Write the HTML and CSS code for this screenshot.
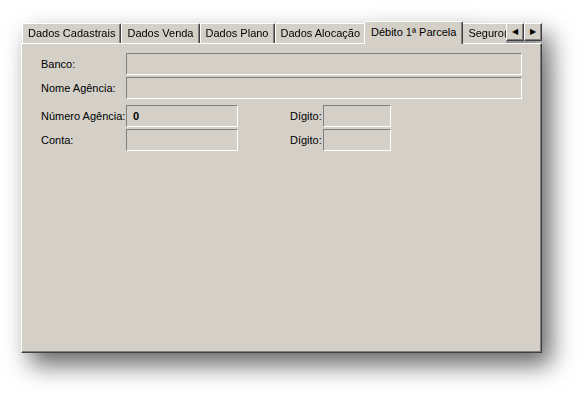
FILE: index.html
```html
<!DOCTYPE html>
<html lang="pt-BR">
<head>
    <meta charset="UTF-8">
    <title>Débito 1ª Parcela</title>
    <link rel="stylesheet" href="styles.css">
</head>
<body>
    <div class="window">
        <div class="tabs">
            <div class="tablist">
                <div class="tab">Dados Cadastrais</div>
                <div class="tab">Dados Venda</div>
                <div class="tab">Dados Plano</div>
                <div class="tab">Dados Alocação</div>
                <div class="tab active">Débito 1ª Parcela</div>
                <div class="tab">Seguro(s)</div>
            </div>
            <div class="scroller">
                <span class="arrow">&#9664;</span>
                <span class="arrow">&#9654;</span>
            </div>
        </div>
        <div class="panel">
            <div class="row">
                <label class="lbl">Banco:</label>
                <div class="field wide"></div>
            </div>
            <div class="row">
                <label class="lbl">Nome Agência:</label>
                <div class="field wide"></div>
            </div>
            <div class="row gap-top">
                <label class="lbl">Número Agência:</label>
                <div class="field mid"><b>0</b></div>
                <label class="lbl2">Dígito:</label>
                <div class="field small"></div>
            </div>
            <div class="row">
                <label class="lbl">Conta:</label>
                <div class="field mid"></div>
                <label class="lbl2">Dígito:</label>
                <div class="field small"></div>
            </div>
        </div>
    </div>
</body>
</html>
```
FILE: styles.css
```css
body {
    margin: 0;
    padding: 20px 0 40px 21px;
    background: #fff;
    font-family: "Liberation Sans", Arial, sans-serif;
    font-size: 11px;
    color: #000;
}
.window {
    width: 521px;
    filter: drop-shadow(9px 12px 12px rgba(0, 0, 0, 0.6));
}
.tabs {
    display: flex;
    height: 24px;
    margin-bottom: -1px;
    position: relative;
    z-index: 1;
}
.tablist {
    flex: 1;
    display: flex;
    align-items: flex-end;
    overflow: hidden;
    padding-left: 1px;
}
.tab {
    flex: none;
    height: 19px;
    line-height: 19px;
    margin-bottom: 1px;
    padding: 0 5px;
    background: #d4d0c8;
    border-top: 1px solid #fff;
    border-left: 1px solid #fff;
    border-right: 1px solid #404040;
    box-shadow: inset -1px 0 0 #808080;
    border-radius: 2px 2px 0 0;
    white-space: nowrap;
}
.tab.active {
    height: 22px;
    line-height: 20px;
    margin: 0 -1px 0 -2px;
    padding: 0 6px;
    position: relative;
    z-index: 2;
}
.scroller {
    flex: none;
    display: flex;
    margin-top: 3px;
    height: 18px;
}
.arrow {
    width: 16px;
    height: 16px;
    background: #d4d0c8;
    border-top: 1px solid #fff;
    border-left: 1px solid #fff;
    border-right: 1px solid #404040;
    border-bottom: 1px solid #404040;
    box-shadow: inset -1px -1px 0 #808080;
    font-size: 8px;
    line-height: 16px;
    text-align: center;
}
.panel {
    height: 310px;
    background: #d4d0c8;
    border-top: 1px solid #fff;
    border-left: 1px solid #fff;
    border-right: 1px solid #404040;
    border-bottom: 1px solid #404040;
    box-shadow: inset -1px -1px 0 #808080;
    padding: 9px 0 0 19px;
    box-sizing: border-box;
}
.row {
    display: flex;
    align-items: center;
    height: 22px;
    margin-bottom: 2px;
}
.gap-top {
    margin-top: 6px;
}
.lbl {
    width: 85px;
}
.lbl2 {
    width: 33px;
    margin-left: 52px;
}
.field {
    height: 22px;
    box-sizing: border-box;
    border-top: 1px solid #808080;
    border-left: 1px solid #808080;
    border-right: 1px solid #fff;
    border-bottom: 1px solid #fff;
    padding-left: 6px;
    line-height: 20px;
}
.wide {
    width: 396px;
}
.mid {
    width: 112px;
}
.small {
    width: 68px;
}
```
